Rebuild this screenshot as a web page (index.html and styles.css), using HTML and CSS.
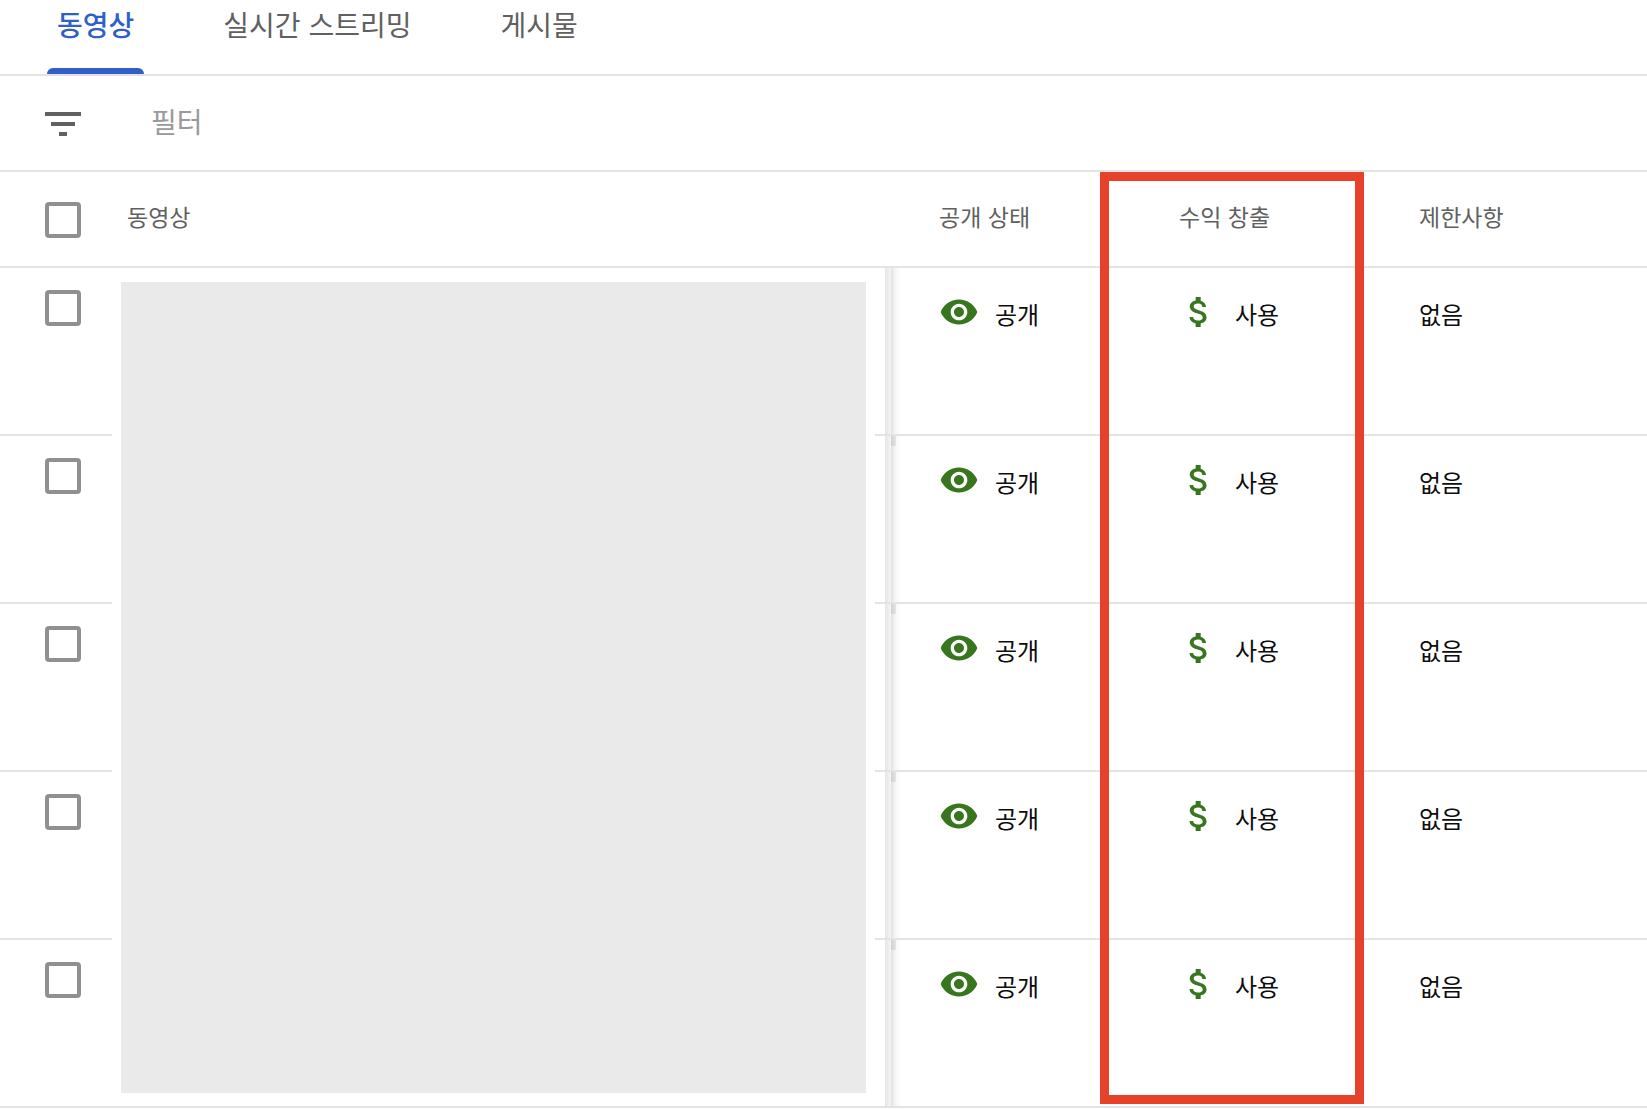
FILE: index.html
```
<!DOCTYPE html>
<html lang="ko">
<head>
<meta charset="utf-8">
<meta name="viewport" content="width=device-width, initial-scale=1">
<title>동영상</title>
<link rel="stylesheet" href="styles.css">
</head>
<body>
<svg class="sprite" aria-hidden="true">
  <symbol id="eye" viewBox="0 0 24 24"><path d="M12 4.500C7 4.500 2.730 7.610 1 12c1.730 4.390 6 7.500 11 7.500s9.270-3.110 11-7.500c-1.730-4.390-6-7.500-11-7.500zM12 17c-2.760 0-5-2.240-5-5s2.240-5 5-5 5 2.240 5 5-2.240 5-5 5zm0-8c-1.660 0-3 1.340-3 3s1.340 3 3 3 3-1.340 3-3-1.340-3-3-3z"/></symbol>
  <symbol id="dollar" viewBox="0 0 24 24"><path d="M11.800 10.900c-2.270-.590-3-1.200-3-2.150 0-1.090 1.010-1.850 2.700-1.850 1.780 0 2.440.850 2.500 2.100h2.210c-.070-1.720-1.120-3.300-3.210-3.810V3h-3v2.160c-1.940.420-3.500 1.680-3.500 3.610 0 2.310 1.910 3.460 4.700 4.130 2.500.600 3 1.480 3 2.410 0 .690-.490 1.790-2.700 1.790-2.060 0-2.870-.920-2.980-2.100h-2.200c.120 2.190 1.760 3.420 3.680 3.830V21h3v-2.150c1.950-.370 3.500-1.500 3.500-3.550 0-2.840-2.430-3.810-4.700-4.400z"/></symbol>
</svg>

<nav class="tabs" role="tablist">
  <button class="tab tab-active" type="button" role="tab" aria-selected="true">동영상</button>
  <button class="tab" type="button" role="tab" aria-selected="false">실시간 스트리밍</button>
  <button class="tab" type="button" role="tab" aria-selected="false">게시물</button>
</nav>

<div class="filter">
  <svg class="filter-icon" viewBox="0 0 36 24" aria-hidden="true"><path d="M0 0h36v4H0zM6 10h24v4H6zM14 20h8v4h-8z"/></svg>
  <input class="filter-input" type="text" placeholder="필터" aria-label="필터">
</div>

<main class="content">
  <table class="videos">
    <colgroup>
      <col class="col-check">
      <col>
      <col class="col-status">
      <col class="col-status">
      <col class="col-limits">
    </colgroup>
    <thead>
      <tr>
        <th class="check"><input type="checkbox" aria-label="모두 선택"></th>
        <th class="name" scope="col">동영상</th>
        <th scope="col">공개 상태</th>
        <th scope="col">수익 창출</th>
        <th scope="col">제한사항</th>
      </tr>
    </thead>
    <tbody>
      <tr>
        <td class="check"><input type="checkbox" aria-label="동영상 선택"></td>
        <td class="preview" rowspan="5"></td>
        <td class="visibility"><div class="status"><svg class="icon"><use href="#eye"/></svg><span>공개</span></div></td>
        <td><div class="status"><svg class="icon"><use href="#dollar"/></svg><span>사용</span></div></td>
        <td><div class="status"><span>없음</span></div></td>
      </tr>
      <tr>
        <td class="check"><input type="checkbox" aria-label="동영상 선택"></td>
        <td class="visibility"><div class="status"><svg class="icon"><use href="#eye"/></svg><span>공개</span></div></td>
        <td><div class="status"><svg class="icon"><use href="#dollar"/></svg><span>사용</span></div></td>
        <td><div class="status"><span>없음</span></div></td>
      </tr>
      <tr>
        <td class="check"><input type="checkbox" aria-label="동영상 선택"></td>
        <td class="visibility"><div class="status"><svg class="icon"><use href="#eye"/></svg><span>공개</span></div></td>
        <td><div class="status"><svg class="icon"><use href="#dollar"/></svg><span>사용</span></div></td>
        <td><div class="status"><span>없음</span></div></td>
      </tr>
      <tr>
        <td class="check"><input type="checkbox" aria-label="동영상 선택"></td>
        <td class="visibility"><div class="status"><svg class="icon"><use href="#eye"/></svg><span>공개</span></div></td>
        <td><div class="status"><svg class="icon"><use href="#dollar"/></svg><span>사용</span></div></td>
        <td><div class="status"><span>없음</span></div></td>
      </tr>
      <tr>
        <td class="check"><input type="checkbox" aria-label="동영상 선택"></td>
        <td class="visibility"><div class="status"><svg class="icon"><use href="#eye"/></svg><span>공개</span></div></td>
        <td><div class="status"><svg class="icon"><use href="#dollar"/></svg><span>사용</span></div></td>
        <td><div class="status"><span>없음</span></div></td>
      </tr>
    </tbody>
  </table>
  <div class="highlight"></div>
</main>
</body>
</html>
```
FILE: styles.css
```
:root {
  --line: #e3e3e3;
  --muted: #606060;
  --blue: #2f5fc8;
  --green: #38761d;
}

* {
  box-sizing: border-box;
}

body {
  min-height: 100vh;
  margin: 0;
  background: #fff;
  color: #0d0d0d;
  font-family: "Noto Sans CJK KR", "Noto Sans", sans-serif;
  font-size: 24px;
}

.sprite {
  display: none;
}

/* Tabs */
.tabs {
  display: flex;
  gap: 69px;
  padding-left: 47px;
  border-bottom: 2px solid var(--line);
}

.tab {
  position: relative;
  padding: 0 10px 26px;
  border: 0;
  background: none;
  color: var(--muted);
  font: inherit;
  font-size: 28px;
  line-height: 48px;
  white-space: nowrap;
}

.tab-active {
  color: var(--blue);
  font-weight: 500;
}

.tab-active::after {
  content: "";
  position: absolute;
  left: 0;
  right: 0;
  bottom: 0;
  height: 6px;
  border-radius: 6px 6px 0 0;
  background: var(--blue);
}

/* Filter bar */
.filter {
  display: flex;
  align-items: center;
  gap: 70px;
  height: 96px;
  padding: 2px 45px 0;
  border-bottom: 2px solid var(--line);
}

.filter-icon {
  flex: none;
  width: 36px;
  height: 24px;
  fill: var(--muted);
}

.filter-input {
  flex: 1;
  min-width: 0;
  padding: 0 0 6px;
  border: 0;
  outline: 0;
  background: none;
  font: inherit;
  font-size: 28px;
  line-height: 40px;
}

.filter-input::placeholder {
  color: #999;
  opacity: 1;
}

/* Video table */
.content {
  position: relative;
}

.videos {
  width: 100%;
  table-layout: fixed;
  border-collapse: separate;
  border-spacing: 0;
}

.col-check {
  width: 112px;
}

.col-status {
  width: 240px;
}

.col-limits {
  width: 292px;
}

th,
td {
  padding: 0 0 0 64px;
  border-bottom: 2px solid var(--line);
  text-align: left;
}

th {
  height: 96px;
  padding-bottom: 6px;
  color: var(--muted);
  font-size: 23px;
  font-weight: 400;
  line-height: 32px;
}

td {
  height: 168px;
  padding-top: 24px;
  vertical-align: top;
}

.check {
  padding: 2px 0 0 45px;
}

td.check {
  padding-top: 22px;
}

.name {
  padding-left: 15px;
}

.check input {
  display: block;
  appearance: none;
  width: 36px;
  height: 36px;
  margin: 0;
  border: 4px solid #909090;
  border-radius: 4px;
}

.preview {
  padding: 14px 9px 13px;
  background: #eaeaea content-box;
}

/* Edge of the frozen column and the shadow that it casts */
.visibility {
  background:
    linear-gradient(#00000014, #00000014) 16px 0 / 5px 10px no-repeat,
    linear-gradient(90deg, #0000 10px, #0000001a 10px, #0000000a 16px, #0000001f 16px, #0000000a 20px, #0000 26px);
}

tr:first-child .visibility {
  background:
    linear-gradient(90deg, #0000 10px, #0000001a 10px, #0000000a 16px, #0000001f 16px, #0000000a 20px, #0000 26px);
}

.status {
  display: flex;
  align-items: center;
  gap: 16px;
  line-height: 40px;
}

.status span {
  padding-top: 2px;
}

.status .icon {
  align-self: flex-start;
}

.icon {
  width: 40px;
  height: 40px;
  fill: var(--green);
}

/* Callout frame round the monetization column */
.highlight {
  position: absolute;
  top: 0;
  right: 283px;
  bottom: 4px;
  width: 264px;
  border: 9px solid #e8412a;
  pointer-events: none;
}
```
